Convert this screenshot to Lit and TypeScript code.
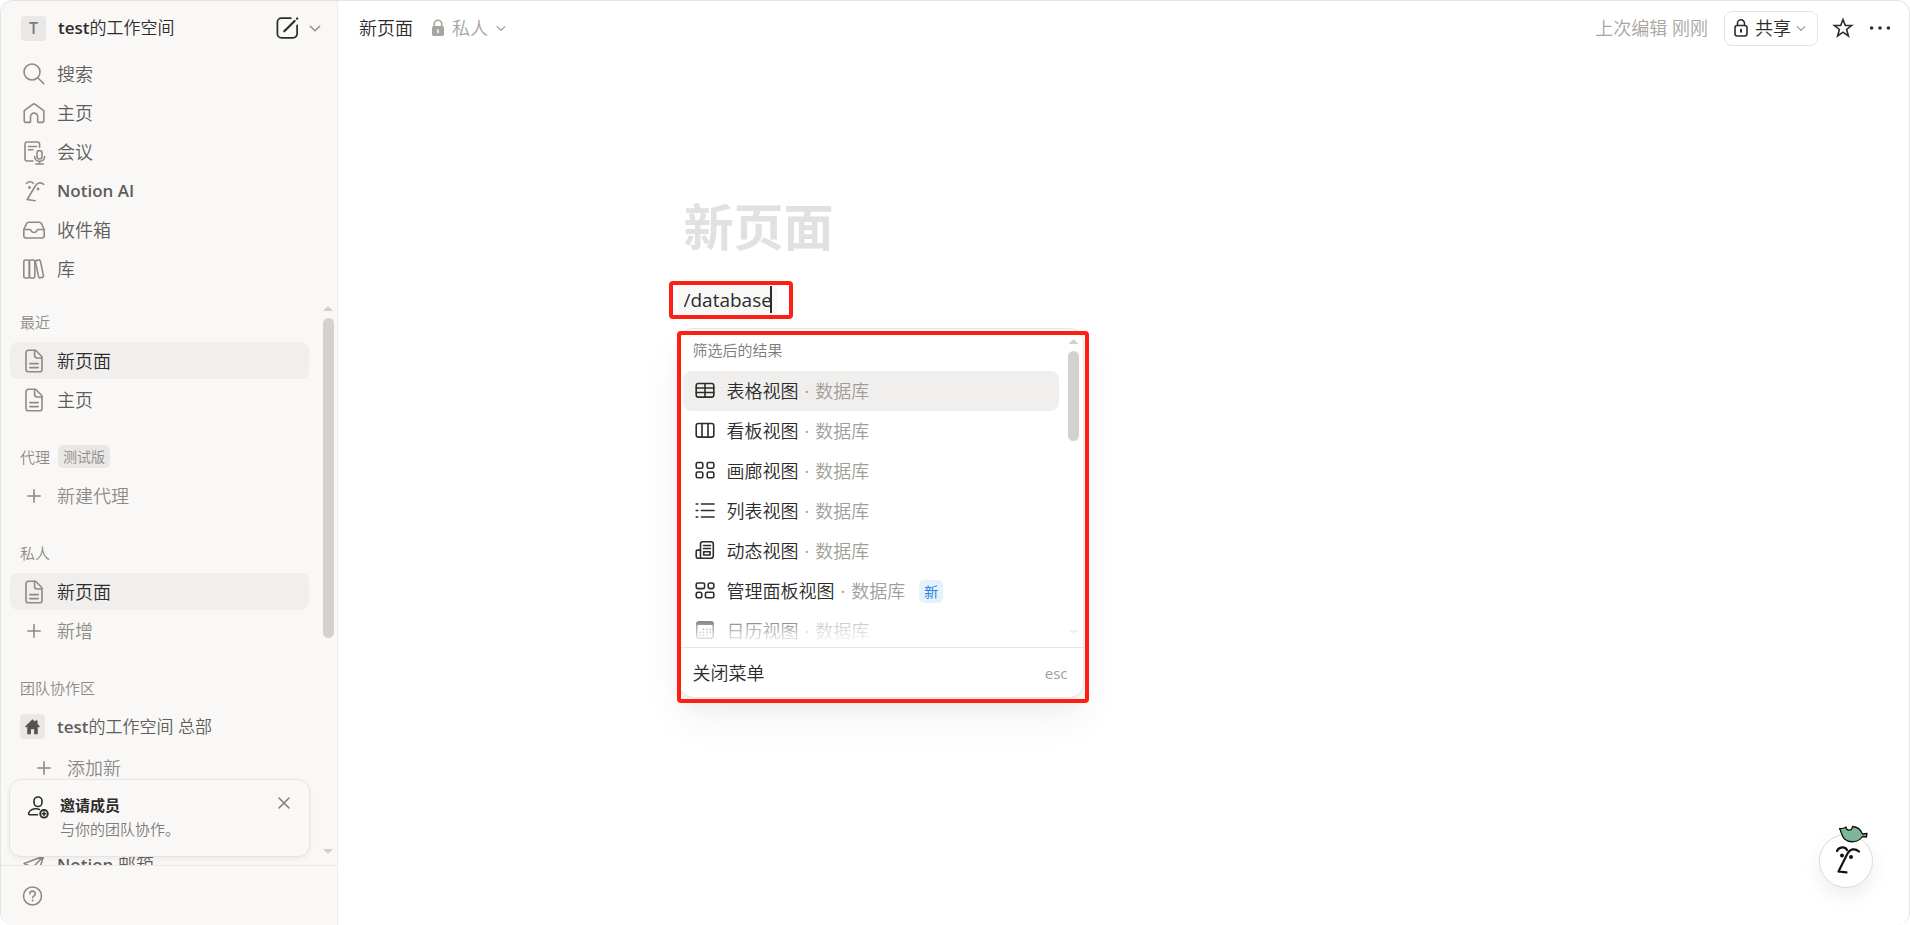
import { LitElement, html, css, svg, nothing } from "lit";
import { customElement, property } from "lit/decorators.js";

const icons: Record<string, unknown> = {
  search: svg`<circle cx="9" cy="9" r="8"/><path d="M14.800 14.800 20.800 20.800"/>`,
  home: svg`<path d="M1.200 8.600 9.800 2.300a2 2 0 0 1 2.400 0l8.600 6.300v9.800a2 2 0 0 1-2 2h-3.200a.9.9 0 0 1-.9-.9v-4.800a3.600 3.600 0 0 0-7.200 0v4.800a.9.9 0 0 1-.9.900H3.200a2 2 0 0 1-2-2z"/>`,
  meet: svg`<path d="M10 20H4.200A2.200 2.200 0 0 1 2 17.800V3.200A2.200 2.200 0 0 1 4.200 1h10.200a2.200 2.200 0 0 1 2.200 2.200v3"/><path d="M5.500 5.500h8M5.500 8.800h4.500"/><rect x="14" y="9.500" width="5" height="8.500" rx="2.500"/><path d="M11.600 15.500a5 4.800 0 0 0 10 0M16.500 20.500v2.500M12.800 23h7.600"/>`,
  ai: svg`<path d="M3.500 3.500c1.800-2.200 5-2.200 6.800-.2M4.200 19.500l7.800-13c2-3.800 5.600-4.800 8.700-2.200M4.200 19.500l7.800 1.200"/><circle cx="6.500" cy="7.500" r="1.400" fill="currentColor" stroke="none"/><circle cx="15" cy="9" r="1.400" fill="currentColor" stroke="none"/>`,
  inbox: svg`<path d="M.8 10.500 3.600 4.600a2.200 2.200 0 0 1 2-1.300h10.800a2.200 2.200 0 0 1 2 1.300l2.800 5.900v6.300a2.200 2.200 0 0 1-2.200 2.200H3a2.200 2.200 0 0 1-2.200-2.200z"/><path d="M.8 10.500H7c.6 0 .8.600 1.200 1.300a3.200 3.200 0 0 0 5.600 0c.4-.7.600-1.300 1.200-1.300h6.200"/>`,
  library: svg`<rect x=".8" y="2" width="5.600" height="18" rx="1.600"/><rect x="6.400" y="2" width="5.400" height="18" rx="1.600"/><rect x="14" y="2" width="5" height="17.800" rx="1.500" transform="rotate(-12 16.500 11)"/>`,
  doc: svg`<path d="M12.600.3H5.300A2.300 2.300 0 0 0 3 2.600v16.800a2.300 2.300 0 0 0 2.300 2.300h11.400a2.300 2.300 0 0 0 2.300-2.300V6.700z"/><path d="M11.600.6v4.900A2.500 2.500 0 0 0 14.100 8h4.700M6.800 13.600h8.400M6.800 17.600h8.400"/>`,
  plus: svg`<path d="M11 4.800v12.400M4.800 11h12.400"/>`,
  house: svg`<path fill="currentColor" stroke="none" d="M11 3.500 3.200 11l1 1.100 1.300-.9v7.800h3.800v-5h3.400v5h3.800v-7.800l1.300.9 1-1.100-2.500-2.500V4.600h-2.700v1.500z"/>`,
  mail: svg`<path d="M1 9.500 20.500 2.200 15 20l-5.200-6.500zM9.800 13.500 20.500 2.200"/>`,
  help: svg`<circle cx="11.500" cy="11" r="9"/><path d="M8.800 8.800c0-3.600 5.600-3.400 5.600-.2 0 2.200-2.800 2.200-2.800 4.200"/><circle cx="11.600" cy="15.600" r="1" fill="currentColor" stroke="none"/>`,
  compose: svg`<path d="M14.500 2H6A3.800 3.800 0 0 0 2.200 5.800v10.500A3.800 3.800 0 0 0 6 20.100h10.500a3.800 3.800 0 0 0 3.800-3.800V8.500"/><path d="M8.500 14 18 4.600M20.200 2.400l.2-.2" stroke-width="2"/>`,
  chevron: svg`<path d="m1.500 6 5.500 5.200L12.500 6" />`,
  invite: svg`<rect x="7" y="1" width="8" height="9.500" rx="4"/><path d="M10.500 18.800H3c-1 0-1.700-.8-1.300-1.800 1-2.400 3.600-4.200 7.300-4.200 1.500 0 2.500.2 3.500.6"/><circle cx="17" cy="17.800" r="3.800" stroke-width="1.900"/><path d="M17 16v3.600M15.200 17.800h3.600" stroke-width="1.500"/>`,
  close: svg`<path d="m5.500 5.500 11 11M16.500 5.500l-11 11"/>`,
  lockSolid: svg`<rect x="5" y="9" width="12" height="10" rx="1.800" fill="currentColor" stroke="none"/><path d="M7.300 9.500V7a3.700 3.700 0 0 1 7.400 0v2.500"/><path d="M11 13v2.500" stroke="#fff"/>`,
  lock: svg`<rect x="5" y="8.500" width="12" height="10.500" rx="2.200"/><path d="M7.500 8.500V6.300a3.500 3.500 0 0 1 7 0v2.200"/><path d="M11 12.800v2" stroke-width="2"/>`,
  star: svg`<path stroke-linejoin="miter" d="m11 2.500 2.300 6h6.300l-5 4 1.800 6.500-5.400-3.800-5.400 3.800 1.800-6.500-5-4h6.300z"/>`,
  dots: svg`<g fill="currentColor" stroke="none"><circle cx="2.600" cy="11" r="1.800"/><circle cx="11" cy="11" r="1.800"/><circle cx="19.400" cy="11" r="1.800"/></g>`,
  table: svg`<rect x="2.200" y="3.500" width="17.600" height="13.600" rx="2.200"/><path d="M2.200 8h17.600M2.200 12.500h17.600M11 3.500v13.600"/>`,
  board: svg`<rect x="2.200" y="3.500" width="17.600" height="13.600" rx="2.200"/><path d="M8 3.500v13.600M14 3.500v13.600"/>`,
  gallery: svg`<rect x="2.200" y="2.500" width="6.600" height="5.800" rx="1.500"/><rect x="13.200" y="2.500" width="6.600" height="5.800" rx="1.500"/><rect x="2.200" y="12" width="6.600" height="5.800" rx="1.500"/><rect x="13.200" y="12" width="6.600" height="5.800" rx="1.500"/>`,
  list: svg`<path d="M7.500 4H20M7.500 10.500H20M7.500 17H20M2.200 4h1.600M2.200 10.500h1.600M2.200 17h1.600"/>`,
  feed: svg`<path d="M6.500 18.300V4A2.300 2.300 0 0 1 8.800 1.700h8.200A2.300 2.300 0 0 1 19.300 4v12a2.300 2.300 0 0 1-2.300 2.300H4.200a2 2 0 0 1-2-2v-5a1.200 1.200 0 0 1 1.200-1.200h3.100"/><path d="M9.500 5.500h7M9.500 8.500h7"/><rect x="9.700" y="11.800" width="6.400" height="3.200"/>`,
  dashboard: svg`<rect x="2.200" y="3" width="8.400" height="5.600" rx="1.500"/><rect x="14.200" y="3" width="5.600" height="5.600" rx="2"/><rect x="2.200" y="12.200" width="5.600" height="5.600" rx="2"/><rect x="11.400" y="12.200" width="8.400" height="5.600" rx="1.500"/>`,
  calendar: svg`<rect x="2.800" y="1.800" width="16.400" height="16.400" rx="2.400" stroke-width="1.400"/><path d="M3.600 3.600h14.800" stroke-width="3"/><path d="M9.500 9.200h.1M12.900 9.200h.1M16.200 9.200h.1M6 12.200h.1M9.500 12.200h.1M12.900 12.200h.1M16.200 12.200h.1M6 15.200h.1M9.500 15.200h.1M12.900 15.200h.1" stroke-width="1.500"/>`,
};

@customElement("ui-icon")
class UiIcon extends LitElement {
  @property() name = "";
  static styles = css`
    :host { display: block; width: 22px; height: 22px; flex: none; }
    .glyph {
      display: block; width: 100%; height: 100%; overflow: visible; fill: none;
      stroke: currentColor; stroke-width: 1.6; stroke-linecap: round; stroke-linejoin: round;
    }
  `;
  render() {
    const box = this.name === "chevron" ? "0 0 14 16" : "0 0 22 22";
    return html`<svg class="glyph" viewBox=${box} aria-hidden="true">${icons[this.name] ?? nothing}</svg>`;
  }
}

@customElement("scroll-track")
class ScrollTrack extends LitElement {
  @property({ type: Number }) share = 50;
  static styles = css`
    :host { display: flex; flex-direction: column; align-items: center; width: 12px; color: #d3d1cb; }
    .arrow { width: 10px; height: 5px; background: currentColor; flex: none; }
    .up { clip-path: polygon(50% 0, 100% 100%, 0 100%); margin-bottom: 7px; }
    .down { clip-path: polygon(0 0, 100% 0, 50% 100%); margin-top: 7px; }
    .lane { flex: 1; width: 11px; min-height: 0; }
    .thumb { background: #d3d2cc; border-radius: 6px; }
  `;
  render() {
    return html`<div class="arrow up"></div>
      <div class="lane"><div class="thumb" style="height:${this.share}%"></div></div>
      <div class="arrow down"></div>`;
  }
}

@customElement("side-bar")
class SideBar extends LitElement {
  static styles = css`
    :host {
      display: flex; flex-direction: column; width: 336px; flex: none; min-height: 0;
      background: #f9f8f7; border-right: 1px solid #eeedec; color: #5f5e5b;
      font-size: 18px; line-height: 24px; position: relative;
    }
    button { font: inherit; color: inherit; background: none; border: 0; padding: 0; display: flex; }
    a { color: inherit; text-decoration: none; }
    .latin { font-size: 17px; font-weight: 600; }
    .name { font-size: 17px; }
    .head { display: flex; align-items: center; height: 54px; padding: 0 16px 0 20px; color: #2c2c2b; }
    .space { flex: 1; gap: 12px; align-items: center; }
    .tile {
      width: 25px; height: 25px; border-radius: 4px; background: #e9e8e6; color: #7d7b77;
      display: grid; place-items: center; font-size: 16px; font-weight: 600; line-height: 24px; flex: none;
    }
    .compose { width: 24px; height: 24px; }
    .chev { width: 12px; height: 14px; color: #8e8c88; }
    .head-tools { display: flex; align-items: center; gap: 10px; }
    .rows { display: flex; flex-direction: column; gap: 2px; padding: 0 28px 0 9px; }
    .row { display: flex; align-items: center; gap: 12px; height: 37px; padding: 0 13px; border-radius: 8px; }
    .row ui-icon { color: #8e8b86; }
    .on { background: #f0efed; color: #2c2c2b; }
    .add { color: #8e8b86; }
    .label { display: flex; align-items: center; gap: 8px; height: 37px; padding: 0 10px; font-size: 15px; color: #8e8b86; font-weight: inherit; margin: 0; }
    .beta { background: #e9e8e6; border-radius: 5px; font-size: 14px; line-height: 23px; padding: 0 5px; }
    .scroll { flex: 1; min-height: 0; display: flex; margin-top: 15px; overflow: hidden; position: relative; }
    .list { flex: 1; display: flex; flex-direction: column; gap: 20px; padding-top: 1px; }
    .bar { position: absolute; right: 3px; top: 4px; bottom: 11px; }
    .team { padding-left: 10px; }
    .team .tile ui-icon { color: #55534e; width: 21px; height: 21px; }
    .child { margin-top: 2px; padding-left: 23px; }
    .apps { margin-top: 40px; }
    .card {
      position: absolute; left: 8px; right: 27px; bottom: 68px; display: flex; gap: 11px;
      padding: 14px 17px 15px 17px; box-sizing: border-box; background: #f9f8f7;
      border: 1px solid #e6e5e3; border-radius: 12px; box-shadow: 0 2px 5px rgba(0, 0, 0, 0.06);
    }
    .card-text { flex: 1; font-size: 15px; line-height: 24px; color: #7d7b77; }
    .card-title { margin: 0; font-size: 15px; font-weight: 600; line-height: 23px; color: #2c2c2b; }
    .card p { margin: 0; }
    .card .who { color: #2c2c2b; margin-top: 2px; }
    .card .close { width: 16px; height: 18px; color: #7d7b77; align-items: center; justify-content: center; }
    .card .close ui-icon { width: 20px; height: 20px; }
    .foot { height: 59px; border-top: 1px solid #e9e8e6; display: flex; align-items: center; padding: 0 20px; color: #8e8b86; flex: none; }
  `;

  private row(icon: string, text: unknown, cls = "") {
    return html`<a class="row ${cls}" href="#"><ui-icon name=${icon}></ui-icon><span>${text}</span></a>`;
  }

  render() {
    return html`
      <div class="head">
        <button class="space"><span class="tile">T</span><span class="name"><span class="latin">test</span>的工作空间</span></button>
        <div class="head-tools">
          <button aria-label="新建页面"><ui-icon class="compose" name="compose"></ui-icon></button>
          <button aria-label="更多"><ui-icon class="chev" name="chevron"></ui-icon></button>
        </div>
      </div>
      <nav class="rows">
        ${this.row("search", "搜索")} ${this.row("home", "主页")} ${this.row("meet", "会议")}
        ${this.row("ai", html`<span class="latin">Notion AI</span>`)}
        ${this.row("inbox", "收件箱")} ${this.row("library", "库")}
      </nav>
      <div class="scroll">
        <div class="list">
          <section class="rows">
            <h2 class="label">最近</h2>
            ${this.row("doc", "新页面", "on")} ${this.row("doc", "主页")}
          </section>
          <section class="rows">
            <h2 class="label">代理<span class="beta">测试版</span></h2>
            ${this.row("plus", "新建代理", "add")}
          </section>
          <section class="rows">
            <h2 class="label">私人</h2>
            ${this.row("doc", "新页面", "on")} ${this.row("plus", "新增", "add")}
          </section>
          <section class="rows">
            <h2 class="label">团队协作区</h2>
            <a class="row team" href="#"><span class="tile"><ui-icon name="house"></ui-icon></span><span class="name"><span class="latin">test</span>的工作空间 总部</span></a>
            ${this.row("plus", "添加新", "add child")}
          </section>
          <section class="rows apps">
            ${this.row("mail", html`<span class="latin">Notion</span> 邮箱`)}
          </section>
        </div>
        <scroll-track class="bar" share="61"></scroll-track>
      </div>
      <aside class="card">
        <ui-icon class="who" name="invite"></ui-icon>
        <div class="card-text"><h3 class="card-title">邀请成员</h3><p>与你的团队协作。</p></div>
        <button class="close" aria-label="关闭"><ui-icon name="close"></ui-icon></button>
      </aside>
      <div class="foot"><button aria-label="帮助"><ui-icon name="help"></ui-icon></button></div>
    `;
  }
}

@customElement("slash-menu")
class SlashMenu extends LitElement {
  private items = [
    { icon: "table", name: "表格视图" },
    { icon: "board", name: "看板视图" },
    { icon: "gallery", name: "画廊视图" },
    { icon: "list", name: "列表视图" },
    { icon: "feed", name: "动态视图" },
    { icon: "dashboard", name: "管理面板视图", fresh: true },
    { icon: "calendar", name: "日历视图" },
  ];
  static styles = css`
    :host {
      display: block; box-sizing: border-box; width: 405px; background: #fff; border: 1px solid #e6e5e3;
      border-radius: 14px; font-size: 18px; line-height: 24px; color: #2c2c2b;
      box-shadow: 0 20px 40px rgba(0, 0, 0, 0.06), 0 8px 16px rgba(0, 0, 0, 0.03);
    }
    :host::after {
      content: ""; position: absolute; inset: 2px -6px -6px -3px;
      border: 4px solid #ff1f12; border-radius: 4px; pointer-events: none;
    }
    button { font: inherit; color: inherit; background: none; border: 0; text-align: left; width: 100%; display: flex; align-items: center; }
    .view { height: 318px; overflow: hidden; position: relative; display: flex; padding: 3px 3px 0 3px; box-sizing: border-box; }
    .list { flex: 1; }
    .label { margin: 0; padding: 0 10px; height: 39px; line-height: 36px; font-size: 15px; font-weight: inherit; color: #7d7b77; }
    .item { height: 40px; border-radius: 8px; padding: 0 11px; gap: 11px; }
    .active { background: #f0efed; }
    .kind { color: #a19e99; }
    .dot { margin: 0 6px; color: #a19e99; font-weight: 400; }
    .fresh { background: #e5f2fc; color: #2783de; font-size: 14px; font-weight: 400; line-height: 23px; padding: 0 5px; border-radius: 5px; margin-left: 3px; }
    .side { margin: 7px 0 12px 9px; }
    .fade { position: absolute; left: 0; right: 0; bottom: 0; height: 44px; background: linear-gradient(rgba(255, 255, 255, 0), #fff 95%); pointer-events: none; }
    .foot { height: 50px; border-top: 1px solid #e6e5e3; padding: 0 15px 0 13px; justify-content: space-between; }
    .key { font-size: 15px; font-weight: 400; color: #a19e99; }
  `;
  render() {
    return html`
      <div class="view">
        <div class="list">
          <h2 class="label">筛选后的结果</h2>
          ${this.items.map(
            (it, i) => html`<button class="item ${i === 0 ? "active" : ""}">
              <ui-icon name=${it.icon}></ui-icon>
              <span>${it.name}<span class="dot">·</span><span class="kind">数据库</span></span>
              ${it.fresh ? html`<span class="fresh">新</span>` : nothing}
            </button>`
          )}
        </div>
        <scroll-track class="side" share="33"></scroll-track>
        <div class="fade"></div>
      </div>
      <button class="foot"><span>关闭菜单</span><span class="key">esc</span></button>
    `;
  }
}

@customElement("app-root")
class AppRoot extends LitElement {
  static styles = css`
    :host { display: block; font-family: "Open Sans", "Noto Sans CJK SC", sans-serif; font-weight: 350; background: #fff; }
    button { font: inherit; color: inherit; background: none; border: 0; padding: 0; display: flex; align-items: center; }
    .shell {
      display: flex; height: 100vh; box-sizing: border-box; overflow: hidden;
      border: 1px solid #e4e4e3; border-bottom: 0; border-radius: 13px;
    }
    .main { flex: 1; min-width: 0; font-size: 18px; line-height: 24px; color: #2c2c2b; }
    .top { display: flex; align-items: center; height: 54px; padding: 0 18px 0 21px; }
    .crumb { margin-right: 14px; }
    .privacy { color: #a8a5a0; gap: 3px; }
    .chev { width: 10px; height: 12px; margin-left: 5px; color: #a19e99; }
    .edited { margin-left: auto; color: #a8a5a0; margin-right: 16px; }
    .share { height: 35px; box-sizing: border-box; border: 1px solid #e4e3e1; border-radius: 8px; padding: 0 11px 0 5px; gap: 3px; }
    .share .chev { margin-left: 2px; }
    .tools { display: flex; gap: 15px; margin-left: 14px; }
    .page { max-width: 880px; margin: 0 auto; padding: 142px 24px 0; }
    .title {
      display: block; width: 100%; border: 0; padding: 0; outline: 0; background: none;
      font: 700 50px/60px "Open Sans", "Noto Sans CJK SC", sans-serif; color: #2c2c2b;
    }
    .title::placeholder { color: #e1e1df; opacity: 1; }
    .block { position: relative; display: flex; margin-top: 28px; height: 30px; align-items: center; }
    .query {
      border: 0; outline: 0; padding: 0 6px; margin-left: -6px; height: 28px; width: 99px; box-sizing: border-box;
      background: #f8f8f7; color: #2c2c2b; font: 400 19px/28px "Open Sans", "Noto Sans CJK SC", sans-serif;
      caret-color: transparent; border-radius: 3px;
    }
    .caret { position: absolute; left: 86px; top: 1px; width: 2px; height: 27px; background: #2c2c2b; }
    .mark { position: absolute; left: -15px; top: -4px; width: 124px; height: 38px; box-sizing: border-box; border: 4px solid #ff1f12; border-radius: 4px; pointer-events: none; }
    .menu { position: absolute; left: -5px; top: 43px; z-index: 2; }
    .face {
      position: fixed; right: 38px; bottom: 38px; width: 52px; height: 52px; border-radius: 50%; background: #fff;
      box-shadow: 0 0 0 1px #dddcda, 0 8px 20px rgba(0, 0, 0, 0.08);
    }
    .face svg { display: block; width: 52px; height: 52px; overflow: visible; }
  `;
  render() {
    return html`
      <div class="shell">
        <side-bar></side-bar>
        <main class="main">
          <header class="top">
            <button class="crumb">新页面</button>
            <button class="privacy"><ui-icon name="lockSolid"></ui-icon>私人<ui-icon class="chev" name="chevron"></ui-icon></button>
            <span class="edited">上次编辑 刚刚</span>
            <button class="share"><ui-icon name="lock"></ui-icon>共享<ui-icon class="chev" name="chevron"></ui-icon></button>
            <div class="tools">
              <button aria-label="收藏"><ui-icon name="star"></ui-icon></button>
              <button aria-label="更多"><ui-icon name="dots"></ui-icon></button>
            </div>
          </header>
          <div class="page">
            <input class="title" aria-label="页面标题" placeholder="新页面" />
            <div class="block">
              <input class="query" aria-label="命令" value="/database" />
              <span class="caret"></span>
              <span class="mark"></span>
              <slash-menu class="menu"></slash-menu>
            </div>
          </div>
        </main>
      </div>
      <button class="face" aria-label="Notion AI">
        <svg viewBox="0 0 52 52" fill="none" stroke="#111" stroke-linecap="round" stroke-linejoin="round">
          <path d="M17 16c2-4.500 8-5 10-1M18.500 36.500l8.500-17c3-6 8-6.500 12-3M18.500 36.500l8 .8" stroke-width="2.200"/>
          <circle cx="22" cy="20.500" r="2" fill="#111" stroke="none"/>
          <circle cx="31" cy="22" r="2" fill="#111" stroke="none"/>
          <path d="M19.500-6.500c2.500.8 4 0 6.500-1.500 0 4 6 4.500 6.500-.5 5 .5 8.500 3.500 10 7.500l4.500-.5-.5 3.500-4-.5C38 8 29 8 24.500 4 21.500 1 21.500-3 19.500-6.500z" fill="#7fb698" stroke-width="1.300"/>
        </svg>
      </button>
    `;
  }
}
